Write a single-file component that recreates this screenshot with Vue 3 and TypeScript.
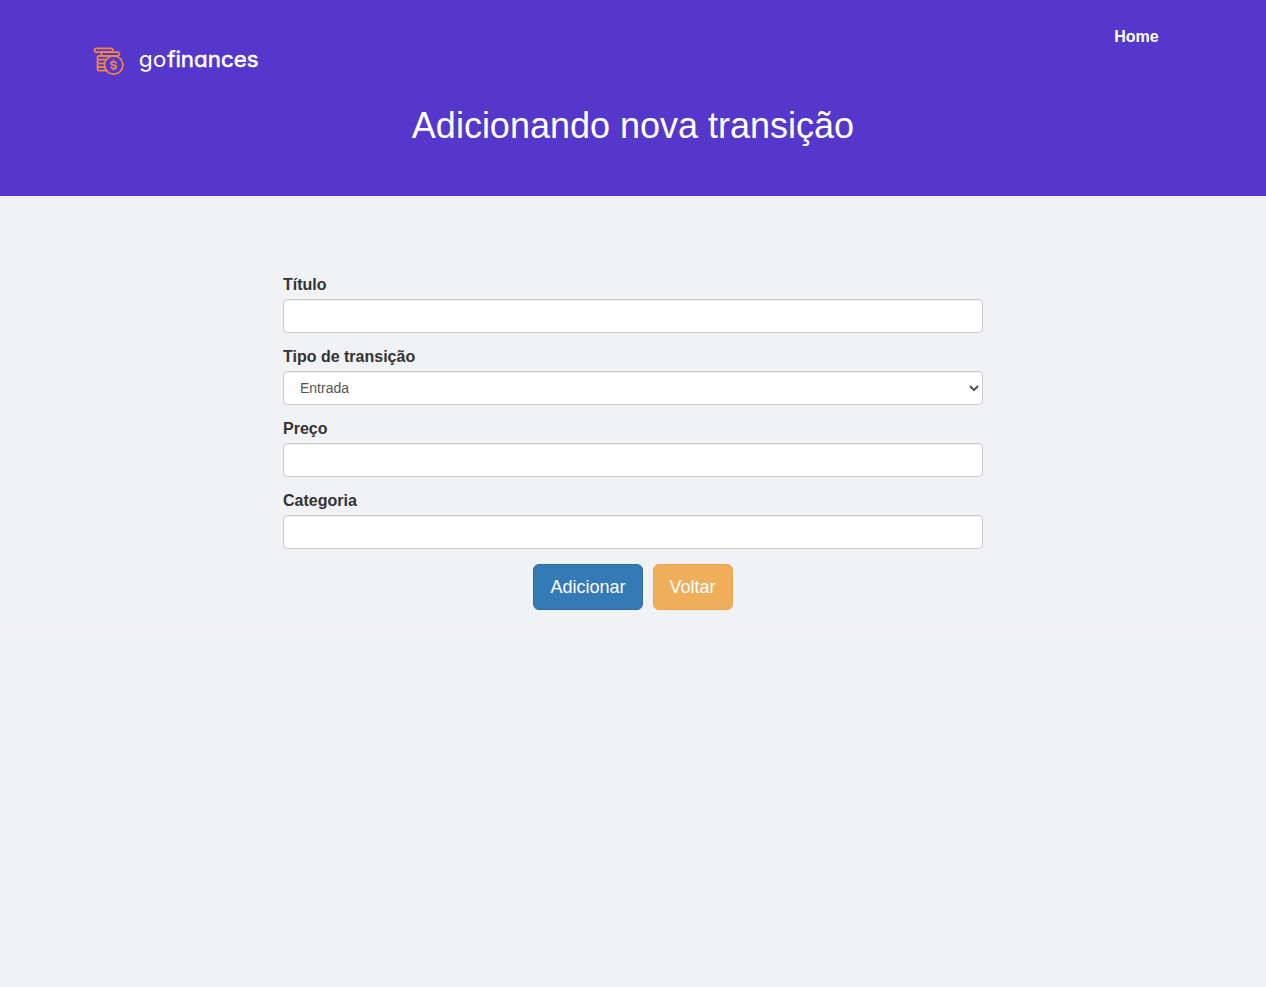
<script setup lang="ts">
import { reactive } from 'vue'

interface Transaction {
  title: string
  type: 'income' | 'outcome'
  price: string
  category: string
}

const form = reactive<Transaction>({ title: '', type: 'income', price: '', category: '' })
</script>

<template>
  <header class="header">
    <nav class="nav">
      <a class="brand" href="#" aria-label="gofinances">
        <svg class="logo" width="170" height="40" viewBox="0 0 170 40">
          <g fill="none" stroke="#f58743" stroke-width="1.75" stroke-linejoin="round" stroke-linecap="round">
            <rect x="2.5" y="8.4" width="18.3" height="3.7" rx="1.8" />
            <path d="M9.4 12.1H25.6a1.8 1.8 0 0 1 1.8 1.8v0.2a1.8 1.8 0 0 1-1.8 1.8H9.4z" />
            <path d="M14 15.9H7.2a1.8 1.8 0 0 0 0 3.7H13.5M13 19.6H7.2a1.8 1.8 0 0 0 0 3.7H11.8M12 23.3H7.2a1.8 1.8 0 0 0 0 3.7H12.3M12.3 27H7.2a1.8 1.8 0 0 0 0 3.7H15" />
            <circle cx="21.7" cy="25" r="9.2" />
            <path d="M24 22.9q-.5-1.2-2.4-1.2c-3.2 0-3.2 3 0 3.4 3.4.3 3.4 3.4 0 3.4q-2-.1-2.5-1.3M21.6 20.5v1.2M21.6 28.5v1.3" />
          </g>
          <text class="wordmark" y="27">
            <tspan x="46.8" textLength="27.6" lengthAdjust="spacingAndGlyphs">go</tspan><tspan class="strong" x="75.2" textLength="91.3" lengthAdjust="spacingAndGlyphs">finances</tspan>
          </text>
        </svg>
      </a>
      <a class="home" href="#">Home</a>
    </nav>
    <h1>Adicionando nova transição</h1>
  </header>
  <main class="content">
    <form class="form" @submit.prevent>
      <div class="group">
        <label for="title">Título</label>
        <input id="title" v-model="form.title" class="control" type="text" />
      </div>
      <div class="group">
        <label for="type">Tipo de transição</label>
        <select id="type" v-model="form.type" class="control">
          <option value="income">Entrada</option>
          <option value="outcome">Saída</option>
        </select>
      </div>
      <div class="group">
        <label for="price">Preço</label>
        <input id="price" v-model="form.price" class="control" type="text" />
      </div>
      <div class="group">
        <label for="category">Categoria</label>
        <input id="category" v-model="form.category" class="control" type="text" />
      </div>
      <div class="actions">
        <button class="btn primary" type="submit">Adicionar</button>
        <button class="btn warning" type="button">Voltar</button>
      </div>
    </form>
  </main>
  <hr class="rule" />
</template>

<style>
body {
  background: #f0f2f5;
}
</style>

<style scoped>
* {
  box-sizing: border-box;
}
.header,
.content {
  font-family: "Liberation Sans", Arial, sans-serif;
}
.header {
  height: 196px;
  background: #5537cc;
  color: #fff;
}
.nav {
  display: flex;
  justify-content: space-between;
  align-items: flex-start;
  height: 100px;
  padding: 0 107.4px 0 92px;
}
.brand {
  margin-top: 40px;
}
.logo {
  display: block;
}
.wordmark {
  font-family: Inter, Lato, sans-serif;
  font-size: 22px;
  font-weight: 400;
  font-feature-settings: "cv11";
  fill: #fff;
}
.strong {
  stroke: #fff;
  stroke-width: 0.5px;
}
.home {
  margin-top: 25px;
  font-size: 16px;
  font-weight: 700;
  line-height: 23px;
  color: #fff;
  text-decoration: none;
}
h1 {
  margin: 6px 0 0;
  font-size: 36px;
  font-weight: 400;
  line-height: 40px;
  text-align: center;
}
.content {
  padding-top: 78px;
}
.form {
  width: 700px;
  margin: 0 auto;
}
.group {
  margin-bottom: 13px;
}
label {
  display: block;
  height: 20px;
  margin-bottom: 5px;
  font-size: 16px;
  font-weight: 700;
  line-height: 22px;
  color: #333;
}
.control {
  display: block;
  width: 100%;
  height: 34px;
  margin: 0;
  padding: 6px 12px;
  font: 14px/20px "Liberation Sans", Arial, sans-serif;
  color: #555;
  background-color: #fff;
  border: 1px solid #ccc;
  border-radius: 4px;
  box-shadow: inset 0 1px 1px rgba(0, 0, 0, 0.075);
}
.actions {
  display: flex;
  justify-content: center;
  gap: 10px;
  padding-top: 2px;
}
.btn {
  height: 46px;
  padding: 10px 16px;
  font: 18px/24px "Liberation Sans", Arial, sans-serif;
  color: #fff;
  border: 1px solid;
  border-radius: 6px;
}
.primary {
  background: #337ab7;
  border-color: #2e6da4;
}
.warning {
  background: #f0ad5a;
  border-color: #eba550;
}
.rule {
  height: 1px;
  margin: 20px 0 0;
  border: 0;
  background: #eee;
}
</style>
